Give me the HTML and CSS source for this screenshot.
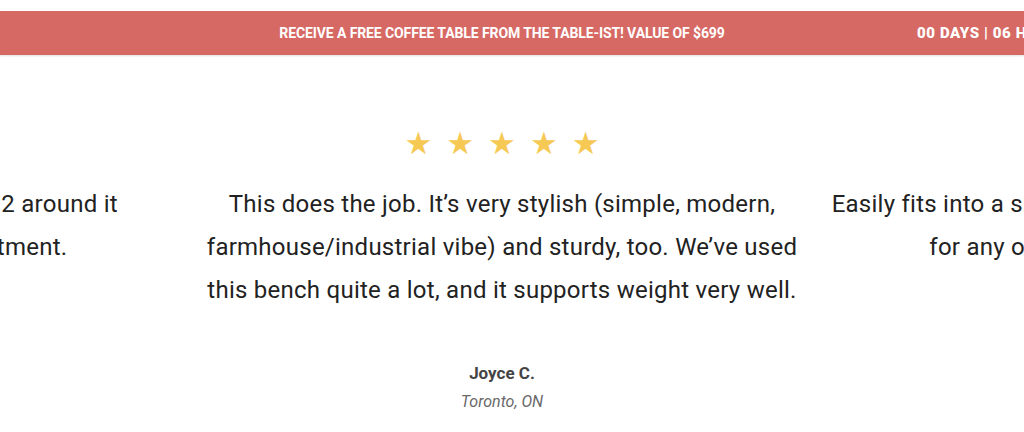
FILE: index.html
```html
<!DOCTYPE html>
<html>
<head>
<meta charset="utf-8">
<link rel="stylesheet" href="styles.css">
</head>
<body>
<div class="page">
  <div class="announce">
    <p class="announce-msg">RECEIVE A FREE COFFEE TABLE FROM THE TABLE-IST! VALUE OF $699</p>
    <p class="countdown">00 DAYS | 06 HRS | 12 MINS</p>
  </div>

  <section class="reviews">
    <div class="track">
      <article class="slide">
        <div class="stars"><span>★</span><span>★</span><span>★</span><span>★</span><span>★</span></div>
        <p class="quote">Perfect size for our kitchen, we sit 2 around it<br>and fits nicely in our tiny apartment.</p>
        <p class="author">Mark T.</p>
        <p class="place">Ottawa, ON</p>
      </article>
      <article class="slide">
        <div class="stars"><span>★</span><span>★</span><span>★</span><span>★</span><span>★</span></div>
        <p class="quote">This does the job. It’s very stylish (simple, modern,<br>farmhouse/industrial vibe) and sturdy, too. We’ve used<br>this bench quite a lot, and it supports weight very well.</p>
        <p class="author">Joyce C.</p>
        <p class="place">Toronto, ON</p>
      </article>
      <article class="slide">
        <div class="stars"><span>★</span><span>★</span><span>★</span><span>★</span><span>★</span></div>
        <p class="quote">Easily fits into a small space and is solid enough to use<br>for any occasion. Would recommend!</p>
        <p class="author">Sarah L.</p>
        <p class="place">Calgary, AB</p>
      </article>
    </div>
  </section>
</div>
</body>
</html>
```

FILE: styles.css
```css
html, body {
  margin: 0;
  padding: 0;
  background: #ffffff;
}

body {
  font-family: "Roboto", "Liberation Sans", sans-serif;
  color: #222222;
  overflow: hidden;
}

.page {
  width: 1024px;
  padding-top: 11px;
}

.announce {
  position: relative;
  height: 44px;
  padding-right: 20px;
  background: #d76964;
  box-shadow: 0 1px 2px rgba(0, 0, 0, 0.12);
  display: flex;
  align-items: center;
  justify-content: center;
}

.announce-msg {
  margin: 0;
  color: #ffffff;
  font-family: "Roboto", sans-serif;
  font-weight: 700;
  font-size: 14px;
  letter-spacing: -0.1px;
}

.countdown {
  position: absolute;
  left: 917px;
  top: 0;
  margin: 0;
  line-height: 44px;
  white-space: nowrap;
  color: #ffffff;
  font-weight: 900;
  font-size: 15px;
  letter-spacing: 0.6px;
}

.reviews {
  width: 1024px;
  overflow: hidden;
  padding-top: 74px;
}

.track {
  display: flex;
  transform: translateX(-443px);
}

.slide {
  flex: 0 0 630px;
  display: flex;
  flex-direction: column;
  align-items: center;
  text-align: center;
}

.stars {
  display: flex;
  gap: 14px;
  color: #f6c955;
  font-size: 31px;
  line-height: 28px;
  height: 28px;
  font-family: "DejaVu Sans", sans-serif;
}

.quote {
  margin: 26px 0 0;
  font-size: 24px;
  line-height: 43px;
  color: #222222;
  letter-spacing: 0.25px;
  white-space: nowrap;
}

.author {
  margin: 49px 0 0;
  font-size: 17px;
  font-weight: 700;
  color: #444444;
  line-height: 24px;
}

.place {
  margin: 6px 0 0;
  font-size: 16px;
  font-style: italic;
  color: #6a6a6a;
  line-height: 22px;
}
```
